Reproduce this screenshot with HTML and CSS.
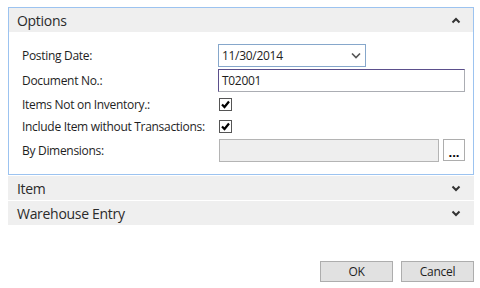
FILE: index.html
```html
<!DOCTYPE html>
<html lang="en">
<head>
  <meta charset="UTF-8" />
  <title>Options</title>
  <link rel="stylesheet" href="styles.css">
</head>
<body>
  <div class="panel open">
    <div class="panel-head">
      <span>Options</span>
      <svg class="chev" width="10" height="7" viewBox="0 0 10 7"><polyline points="1.5,5.5 5,2 8.5,5.5" /></svg>
    </div>
    <div class="form">
      <label>Posting Date:</label>
      <div class="select">
        <span>11/30/2014</span>
        <svg width="10" height="7" viewBox="0 0 10 7"><polyline points="1,1.5 5,5.5 9,1.5" /></svg>
      </div>

      <label>Document No.:</label>
      <div class="text-input">T02001</div>

      <label>Items Not on Inventory.:</label>
      <div class="check"><svg width="11" height="11" viewBox="0 0 11 11"><polyline points="2,5.5 4.5,8 9,2.5" /></svg></div>

      <label>Include Item without Transactions:</label>
      <div class="check"><svg width="11" height="11" viewBox="0 0 11 11"><polyline points="2,5.5 4.5,8 9,2.5" /></svg></div>

      <label>By Dimensions:</label>
      <div class="dims">
        <div class="text-input disabled"></div>
        <button class="assist">...</button>
      </div>
    </div>
  </div>

  <div class="panel-head closed">
    <span>Item</span>
    <svg class="chev" width="10" height="7" viewBox="0 0 10 7"><polyline points="1.5,1.5 5,5 8.5,1.5" /></svg>
  </div>
  <div class="panel-head closed">
    <span>Warehouse Entry</span>
    <svg class="chev" width="10" height="7" viewBox="0 0 10 7"><polyline points="1.5,1.5 5,5 8.5,1.5" /></svg>
  </div>

  <div class="actions">
    <button class="btn">OK</button>
    <button class="btn">Cancel</button>
  </div>
</body>
</html>
```

FILE: styles.css
```css
body {
  margin: 0;
  padding: 7px 6px 0 8px;
  background: white;
  font-family: 'Open Sans', sans-serif;
  font-size: 12px;
  letter-spacing: -0.3px;
  color: #1e1e1e;
}

.panel {
  border: 1px solid #9cc3f0;
}

.panel-head {
  display: flex;
  align-items: center;
  justify-content: space-between;
  height: 24px;
  padding: 0 12px 0 8px;
  background: #efefef;
  font-size: 14px;
  color: #2b2b2b;
}

.panel-head.closed {
  margin-top: 1px;
  padding-left: 9px;
  padding-right: 13px;
}

.panel-head.closed:first-of-type {
  margin-top: 2px;
}

.chev polyline {
  fill: none;
  stroke: #333;
  stroke-width: 2;
}

.form {
  display: grid;
  grid-template-columns: 196px 1fr;
  grid-template-rows: 26px 25px 22px 23px 24px;
  align-items: center;
  padding: 10px 8px 12px 13px;
}

.form label {
  white-space: nowrap;
}

.select {
  display: flex;
  align-items: center;
  justify-content: space-between;
  padding: 0 4px 0 3px;
  border: 1px solid #86a7cb;
  box-sizing: border-box;
  height: 23px;
  width: 148px;
}

.select polyline {
  fill: none;
  stroke: #555;
  stroke-width: 1.6;
}

.text-input {
  height: 23px;
  box-sizing: border-box;
  border: 1px solid #abadb3;
  border-top-color: #5b4f8c;
  border-left-color: #5b4f8c;
  padding: 0 3px;
  line-height: 21px;
}

.check {
  width: 13px;
  height: 13px;
  box-sizing: border-box;
  border: 1px solid #555;
  margin-left: 1px;
  display: flex;
  align-items: center;
  justify-content: center;
}

.check polyline {
  fill: none;
  stroke: #000;
  stroke-width: 2.2;
}

.dims {
  display: flex;
  gap: 4px;
  margin-left: 1px;
}

.dims .text-input {
  flex: 1;
}

.text-input.disabled {
  background: #eeeeee;
  border: 1px solid #b4b4b4;
}

.assist {
  width: 22px;
  height: 22px;
  border: 1px solid #adadad;
  background: white;
  font-family: 'Open Sans', sans-serif;
  font-size: 13px;
  font-weight: bold;
  letter-spacing: 0;
  padding: 6px 0 0;
  line-height: 1;
}

.actions {
  display: flex;
  justify-content: flex-end;
  gap: 8px;
  margin-top: 36px;
}

.btn {
  width: 73px;
  height: 21px;
  border: 1px solid #adadad;
  background: #e1e1e1;
  font-family: 'Open Sans', sans-serif;
  font-size: 12px;
  letter-spacing: -0.3px;
  color: #1e1e1e;
  padding: 0;
}
```
